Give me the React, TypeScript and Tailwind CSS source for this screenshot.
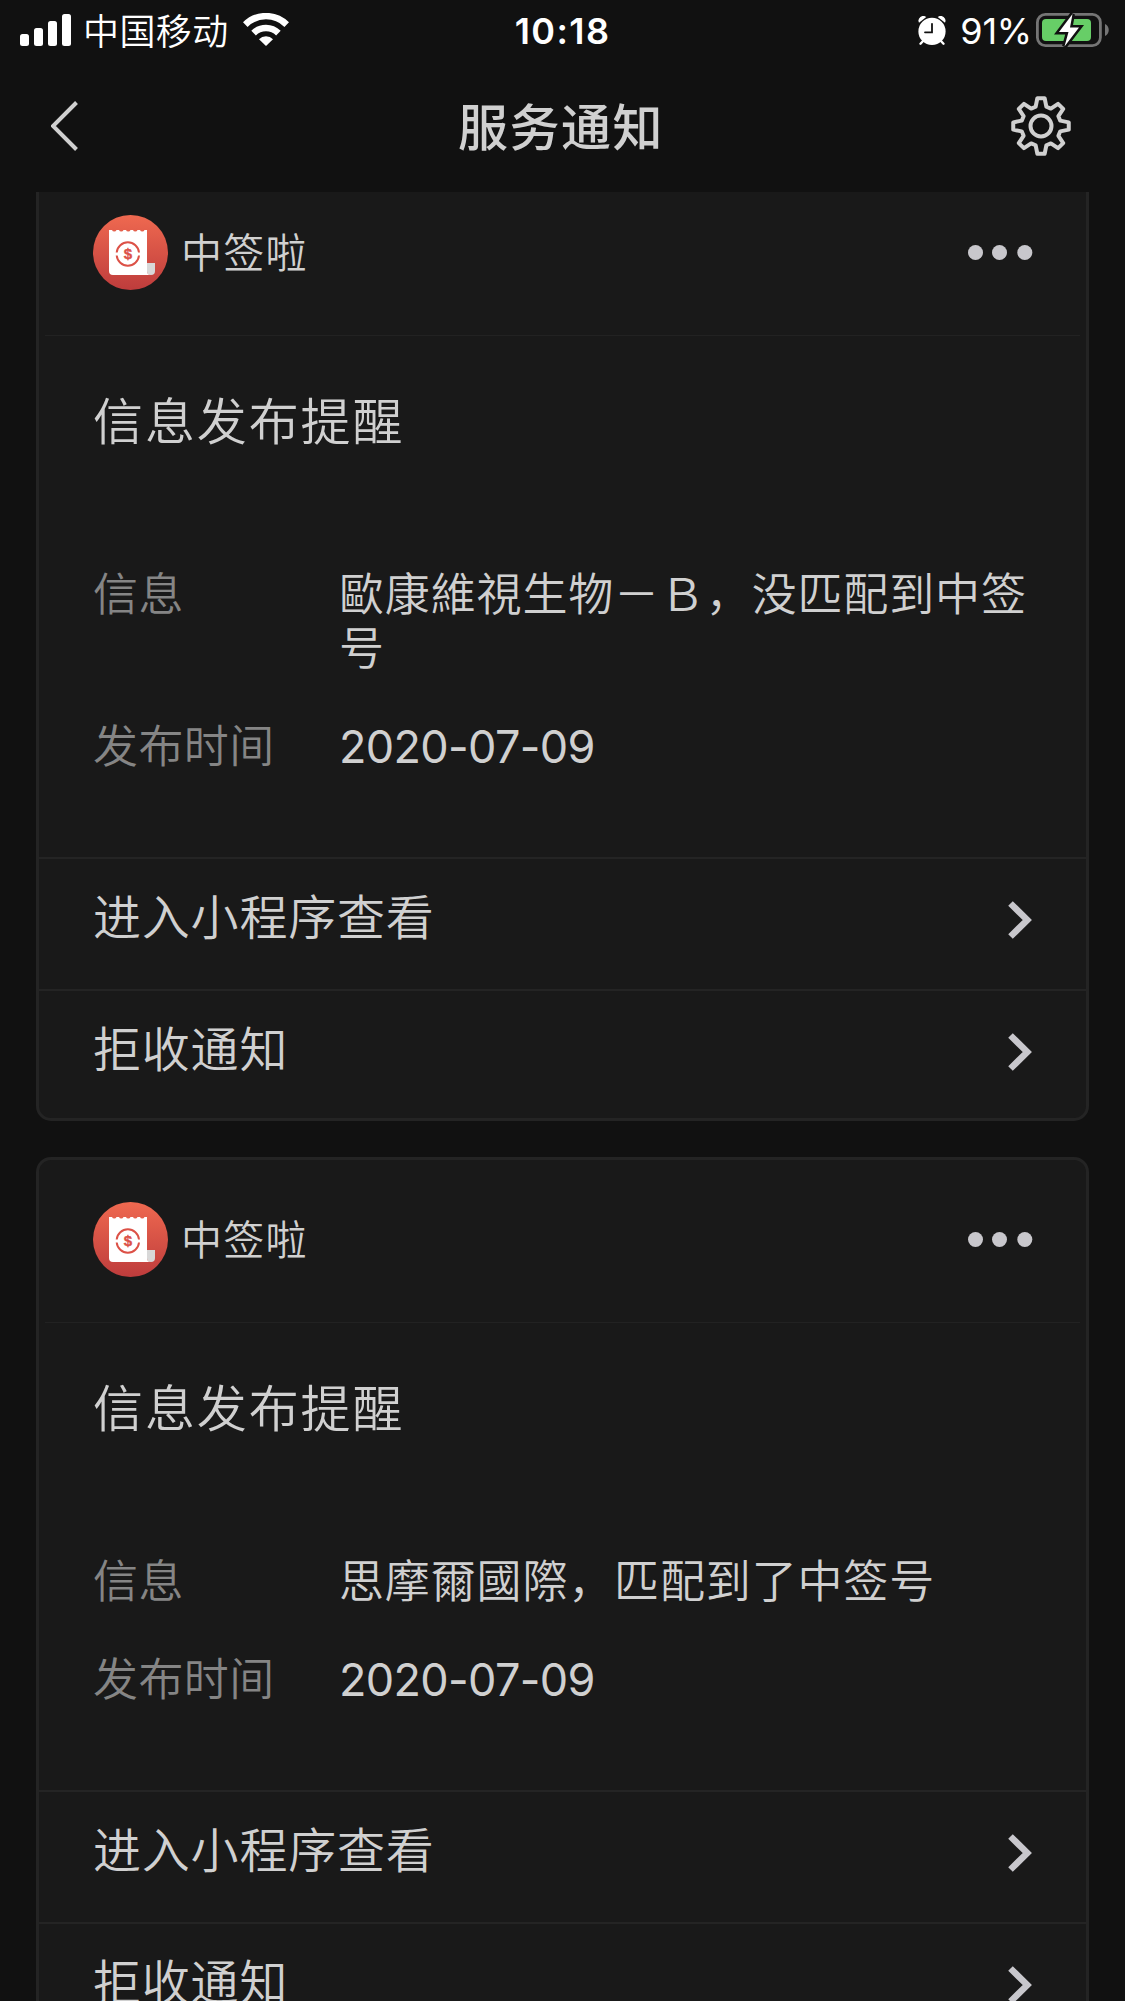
import type { ReactNode } from "react";

type Notice = {
  info: string;
  date: string;
};

const notices: Notice[] = [
  { info: "歐康維視生物－Ｂ，没匹配到中签号", date: "2020-07-09" },
  { info: "思摩爾國際，匹配到了中签号", date: "2020-07-09" },
];

// eight teeth, each one with a narrow tip and a wider foot
const gearPoints = Array.from({ length: 8 }, (_, i) =>
  [
    [-15.5, 20],
    [-7.5, 28],
    [7.5, 28],
    [15.5, 20],
  ].map(([offset, r]) => {
    const a = ((i * 45 + offset) * Math.PI) / 180;
    return `${(30 + r * Math.sin(a)).toFixed(2)},${(30 - r * Math.cos(a)).toFixed(2)}`;
  })
)
  .flat()
  .join(" ");

function StatusBar() {
  return (
    <div className="grid h-[60px] grid-cols-3 text-[36px] leading-[62px] text-white">
      <div className="flex pl-5">
        <svg className="mt-3.5 h-8 w-[51px]" viewBox="0 0 51 32" fill="currentColor">
          <rect x="0" y="20" width="9" height="12" rx="2.5" />
          <rect x="14" y="14" width="9" height="18" rx="2.5" />
          <rect x="28" y="7" width="9" height="25" rx="2.5" />
          <rect x="42" y="0" width="9" height="32" rx="2.5" />
        </svg>
        <span className="ml-3 pt-px font-[350] tracking-[0.4px]">中国移动</span>
        <svg className="mt-[13px] ml-3.5 h-[33px] w-[46px]" viewBox="0 0 46 33">
          <g fill="none" stroke="currentColor" strokeWidth="6.5">
            <path d="M2.3 11.6a29.5 29.5 0 0 1 41.4 0" />
            <path d="M10.6 20.1a17.6 17.6 0 0 1 24.8 0" />
          </g>
          <path d="M23 33l-7-6.8a9.8 9.8 0 0 1 14 0z" fill="currentColor" />
        </svg>
      </div>
      <div className="text-center font-semibold tracking-[1.4px]">10:18</div>
      <div className="flex justify-end pr-4">
        <svg className="mt-4 h-[29px] w-7" viewBox="0 0 28 29">
          <g fill="currentColor">
            <circle cx="14" cy="15.4" r="13.6" />
            <path d="M1 6.8A4.8 4.8 0 0 1 8.3 1z" />
            <path d="M27 6.8A4.8 4.8 0 0 0 19.7 1z" />
          </g>
          <path d="M5.5 24.5l-3 3.2M22.5 24.5l3 3.2" stroke="currentColor" strokeWidth="2.4" strokeLinecap="round" />
          <path d="M14 7.8v8.5H7" fill="none" stroke="#111" strokeWidth="1.8" strokeLinecap="round" />
        </svg>
        <span className="ml-3.5 font-normal tracking-[-0.2px]">91%</span>
        <svg className="mt-[13px] ml-1 h-[34px] w-[73px]" viewBox="0 0 73 34">
          <rect x="1.4" y="1.4" width="63" height="31.2" rx="8" fill="none" stroke="#757575" strokeWidth="2.8" />
          <path d="M69 11v12c5-2 5-10 0-12z" fill="#757575" />
          <rect x="6" y="6" width="49" height="22" rx="4" fill="#67ce67" />
          <path d="M36.5 1L23 19h9.5L28.5 33.5 43 14.5H34z" fill="#fff" stroke="#111" strokeWidth="5" />
          <path d="M36.5 1L23 19h9.5L28.5 33.5 43 14.5H34z" fill="#fff" />
        </svg>
      </div>
    </div>
  );
}

function NavBar() {
  return (
    <div className="flex h-[132px] items-center justify-between pr-[54px] pl-[51px] text-[#d0d0d0]">
      <svg className="h-[50px] w-[60px]" viewBox="0 0 60 50" fill="none" stroke="currentColor" strokeWidth="4">
        <path d="M25.5 1.5L2 25l23.5 23.5" />
      </svg>
      <h1 className="pt-1 text-[50px] leading-none font-medium tracking-[1.5px]">服务通知</h1>
      <svg className="h-[60px] w-[60px]" viewBox="0 0 60 60" fill="none" stroke="currentColor" strokeWidth="4">
        <polygon points={gearPoints} strokeLinejoin="round" />
        <circle cx="30" cy="30" r="10.5" />
      </svg>
    </div>
  );
}

function Avatar({ id }: { id: string }) {
  return (
    <svg className="h-[75px] w-[75px]" viewBox="0 0 75 75">
      <defs>
        <linearGradient id={id} x1="0" y1="0" x2="0" y2="1">
          <stop offset="0" stopColor="#ef6950" />
          <stop offset="1" stopColor="#be3c3c" />
        </linearGradient>
      </defs>
      <circle cx="37.5" cy="37.5" r="37.5" fill={`url(#${id})`} />
      <path d="M54 48h8v8a4 4 0 0 1-8 0z" fill="#d8d8d8" />
      <path
        d="M16 15h3a2.400 2.400 0 0 0 4.500 0h2.500a2.400 2.400 0 0 0 4.500 0h2.500a2.400 2.400 0 0 0 4.500 0h2.500a2.400 2.400 0 0 0 4.500 0h2.500a2.400 2.400 0 0 0 4.500 0H54v41a4 4 0 0 0 4 4H20a4 4 0 0 1-4-4z"
        fill="#fff"
      />
      <path
        d="M23.7 37.5a11.2 11.2 0 0 1 22.3 0M23.7 40.5a11.2 11.2 0 0 0 22.3 0"
        fill="none"
        stroke="#dc5147"
        strokeWidth="2"
      />
      <text
        x="34.8"
        y="44.3"
        textAnchor="middle"
        fontSize="15"
        fontWeight="700"
        fill="#dc5147"
        stroke="#dc5147"
        strokeWidth="0.4"
        className="font-['Liberation_Sans_Narrow','Liberation_Sans',sans-serif]"
      >
        $
      </text>
    </svg>
  );
}

function Field({ label, children }: { label: string; children: ReactNode }) {
  return (
    <div className="flex text-[45px] leading-[54px]">
      <div className="w-[246px] shrink-0 tracking-[0.4px] text-[#858585]">{label}</div>
      <div className="w-[700px] break-all text-[#d0d0d0]">{children}</div>
    </div>
  );
}

function Action({ label }: { label: string }) {
  return (
    <div className="flex h-[132px] items-start justify-between border-t-2 border-[#242424] px-[54px] last:h-[129px]">
      <span className="mt-[29px] text-[48px] leading-[60px] tracking-[0.8px] text-[#d0d0d0]">{label}</span>
      <svg className="mt-[42px] h-[38px] w-6" viewBox="0 0 24 38" fill="none" stroke="#c8c7cc" strokeWidth="6.5">
        <path d="M2.5 2.5L19.3 19l-16.8 16.5" />
      </svg>
    </div>
  );
}

function NoticeCard({ notice, id }: { notice: Notice; id: string }) {
  return (
    <div className="rounded-[15px] border-3 border-[#242424] bg-[#191919] font-[350]">
      <div className="mx-1.5 flex h-[163px] items-center border-b border-[#222] pr-[47px] pb-[3px] pl-12">
        <Avatar id={id} />
        <span className="ml-[13px] pt-px text-[41px] leading-none tracking-[1.3px] text-[#d0d0d0]">中签啦</span>
        <svg className="ml-auto h-[15px] w-[65px]" viewBox="0 0 65 15" fill="#c8c7cc">
          <circle cx="7.5" cy="7.5" r="7.5" />
          <circle cx="31.5" cy="7.5" r="7.5" />
          <circle cx="56.8" cy="7.5" r="7.5" />
        </svg>
      </div>
      <div className="px-[54px] pt-14 pb-[83px]">
        <h2 className="text-[50px] leading-[60px] tracking-[1.9px] text-[#d0d0d0]">信息发布提醒</h2>
        <div className="mt-[116px] flex flex-col gap-11">
          <Field label="信息">
            <span className="tracking-[0.85px]">{notice.info}</span>
          </Field>
          <Field label="发布时间">
            <span className="font-normal tracking-[-0.65px]">{notice.date}</span>
          </Field>
        </div>
      </div>
      <div>
        <Action label="进入小程序查看" />
        <Action label="拒收通知" />
      </div>
    </div>
  );
}

export default function App() {
  return (
    <div className="flex h-[2001px] w-[1125px] flex-col overflow-hidden bg-[#111] font-['Inter','Noto_Sans_CJK_SC',sans-serif]">
      <StatusBar />
      <NavBar />
      <div className="min-h-0 flex-1 overflow-hidden px-9">
        {/* list is scrolled a little, so the first card starts under the nav bar */}
        <div className="-mt-[22px] flex flex-col gap-9">
          {notices.map((notice, i) => (
            <NoticeCard key={i} notice={notice} id={`avatar-${i}`} />
          ))}
        </div>
      </div>
    </div>
  );
}
